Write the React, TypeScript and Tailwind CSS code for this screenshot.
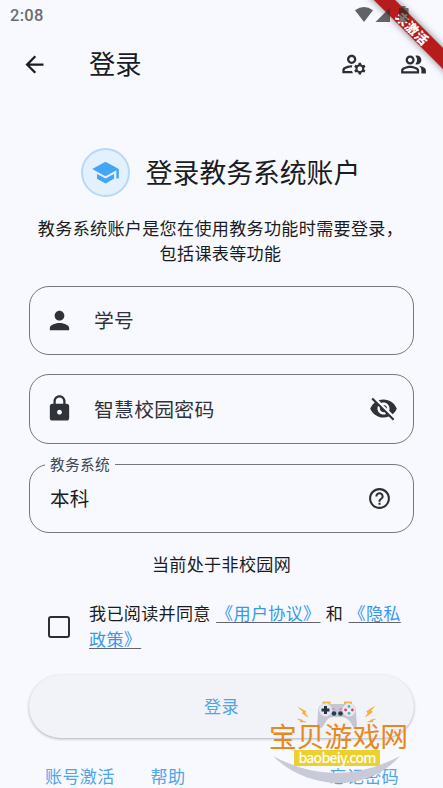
import React, { useState } from 'react';
import {
  MdArrowBack, MdOutlineManageAccounts, MdOutlinePeopleAlt, MdSchool,
  MdPerson, MdLock, MdVisibilityOff, MdHelpOutline
} from 'react-icons/md';

const StatusBar = () => (
  <div className="flex h-8 items-start justify-between pl-[10px] pr-[34px]">
    <span className="pt-[5px] font-[Roboto] text-[16.500px] leading-[22px] font-medium text-[#6b6c6f]">2:08</span>
    <svg className="relative z-10 mt-[5px]" width="56" height="19" viewBox="353 5 56 19">
      <path d="M355 10.2 Q364 3.800 373 10.200 L364 22 Z" fill="#616265" />
      <path d="M390 7.500 V22 H375.500 Z" fill="#333" fillOpacity=".75" />
      <path d="M401.500 6 h4 v2 h3 v14 h-9.500 v-14 h2.500 Z" fill="#222" fillOpacity=".6" />
    </svg>
  </div>
);

const Ribbon = () => (
  <div className="pointer-events-none absolute top-0 right-0 size-[120px] overflow-hidden">
    <div className="absolute top-[21.500px] left-[11px] flex h-[15px] w-[160px] rotate-45 items-center justify-center bg-[#b71c1c] pr-[4px] text-[13px] leading-none font-black text-white shadow-[0_0_7px_rgba(0,0,0,0.5)]">
      未激活
    </div>
  </div>
);

const Watermark = () => (
  <svg className="pointer-events-none absolute top-[690px] left-[260px] tracking-normal" width="160" height="98" viewBox="260 690 160 98">
    <path d="M273 756 Q336 790 400 756 C384 774 362 783 339 783 C314 783 290 773 273 756 Z" fill="#c8cad7" />
    {/* controller */}
    <ellipse cx="338" cy="711" rx="17" ry="14" fill="#f4f3ef" />
    <path d="M323.500 704 v-1.500 h6 v1.500 M345 704 v-1.500 h6 v1.500" stroke="#edbb45" strokeWidth="2" fill="none" />
    <path d="M325 704 H350 C355 704 356.500 708 356 713 L357 726 Q354 730 351 723 Q347 717 342 717 H333 Q328 717 325 723 Q321 731 317 727 L318 713 C318 707 320 704 325 704 Z" fill="#c4c6d4" />
    <circle cx="325.500" cy="710" r="6.500" fill="#e5e6ee" />
    <circle cx="349" cy="710" r="6.500" fill="#e9e9f1" />
    <path d="M325.500 706 v8 M321.500 710 h8" stroke="#263442" strokeWidth="3" />
    <circle cx="334" cy="713.500" r="2.300" fill="#263d50" />
    <circle cx="340.500" cy="713.500" r="2.300" fill="#263d50" />
    <circle cx="349" cy="706.500" r="1.400" fill="#43b5d7" />
    <circle cx="349" cy="713.300" r="1.400" fill="#35b9c9" />
    <circle cx="345.600" cy="710" r="1.400" fill="#d74352" />
    <circle cx="352.400" cy="710" r="1.400" fill="#d74352" />
    <path d="M332.500 709 h2 M339.500 709 h2" stroke="#d66474" strokeWidth="1" />
    {/* sparks */}
    <g fill="#f6b52e" stroke="#e89b20" strokeWidth=".4">
      <path d="M298.500 707.500 L306 711.500 L305 713 L308 717 L302.500 713.500 L303 711.500 Z" />
      <path d="M374.500 706.500 L366.500 711.500 L368 713 L365.500 717 L372.500 712 L371 710.500 Z" />
      <path d="M297.500 719 L302.500 720 L302 721 L306 722 L300 722 L301 721 Z" />
      <path d="M375.500 719 L370.500 720 L371 721 L367.500 722 L373 722 L372 721 Z" />
    </g>
    <text x="338.500" y="746.500" textAnchor="middle" className="font-['Noto_Sans_CJK_SC',sans-serif] text-[27.800px]" fill="#e8881c">宝贝游戏网</text>
    <rect x="294" y="750" width="86" height="16" fill="#ecd02f" />
    <text x="337.500" y="762.500" textAnchor="middle" textLength="78" className="font-['Noto_Sans_CJK_SC',sans-serif] text-[14px] font-medium" fill="#fffdf0">baobeiy.com</text>
  </svg>
);

const fieldClass = 'flex items-center rounded-[20px] border-[1.300px] border-[#74777f]';
const linkClass = 'text-[#3698ea] underline decoration-[#65666c] decoration-1 underline-offset-[2px] [text-decoration-skip-ink:none]';

export default function App() {
  const [agreed, setAgreed] = useState(false);

  return (
    <div className="relative h-[788px] w-[443px] overflow-hidden bg-[#f8f9ff] font-['Noto_Sans_CJK_SC',sans-serif] text-[17.100px] tracking-[0.300px] text-[#191c20]">
      <Ribbon />
      <StatusBar />

      {/* App bar */}
      <header className="flex h-16 items-center pr-4 pl-[21px]">
        <MdArrowBack size={27} />
        <h1 className="ml-[41px] flex-1 pb-[2px] text-[26.300px] leading-[36px] tracking-normal">登录</h1>
        <MdOutlineManageAccounts size={28} className="mr-8 text-[#2b2e33]" />
        <MdOutlinePeopleAlt size={27} className="text-[#2b2e33]" />
      </header>

      <main className="px-[29px]">
        <div className="mt-[52px] flex h-[49px] items-center justify-center gap-4 pr-[2px]">
          <div className="flex size-[49px] items-center justify-center rounded-full border-[2px] border-[#b7d9f6] bg-[#e3f0fd]">
            <MdSchool size={29} className="text-[#42a5f5]" />
          </div>
          <h2 className="pb-[2px] text-[26.800px] leading-[40px] tracking-normal">登录教务系统账户</h2>
        </div>

        <p className="mt-[19px] pr-[2px] text-center leading-[24.750px]">
          教务系统账户是您在使用教务功能时需要登录，<br />包括课表等功能
        </p>

        <div className={`${fieldClass} mt-5 h-[69px] pl-[15px] text-[19.800px] text-[#2f3238]`}>
          <MdPerson size={29} />
          <span className="ml-[20px]">学号</span>
        </div>

        <div className={`${fieldClass} mt-[19px] h-[70px] pr-[15px] pl-[15px] text-[19.800px] text-[#2f3238]`}>
          <MdLock size={29} />
          <span className="ml-[20px] flex-1">智慧校园密码</span>
          <MdVisibilityOff size={29} />
        </div>

        <div className={`${fieldClass} relative mt-5 h-[69px] pr-[21px] pl-[20px] text-[19.500px]`}>
          <span className="absolute -top-[12px] left-[15px] bg-[#f8f9ff] px-[5px] text-[14.700px] leading-[22px] text-[#43474e]">教务系统</span>
          <span className="flex-1">本科</span>
          <MdHelpOutline size={25} className="text-[#2b2e33]" />
        </div>

        <p className="mt-[18px] text-center leading-[25px]">当前处于非校园网</p>

        <div className="mt-[24px] flex items-center pl-[19px]">
          <button
            onClick={() => setAgreed(!agreed)}
            className={`mt-[3px] size-[22px] shrink-0 rounded-[3px] border-[2px] border-[#2b2e33] ${agreed ? 'bg-[#2b2e33]' : ''}`}
          />
          <p className="ml-[19px] leading-[26px] [word-spacing:1.200px]">
            我已阅读并同意{' '}
            <span className={linkClass}>《用户协议》</span>
            {' '}和{' '}
            <span className={linkClass}>《隐私<br />政策》</span>
          </p>
        </div>

        <button className="mt-[23px] flex h-[63px] w-[385px] items-center justify-center rounded-full bg-[#f1f3f8] text-[#4fa5ed] shadow-[0_1px_3px_rgba(0,0,0,0.3)]">
          登录
        </button>

        <div className="mt-[25px] flex pr-[15px] pl-[16px] leading-[25px] text-[#4fa5ed]">
          <span>账号激活</span>
          <span className="ml-[36px]">帮助</span>
          <span className="ml-auto">忘记密码</span>
        </div>
      </main>

      <Watermark />
    </div>
  );
}
